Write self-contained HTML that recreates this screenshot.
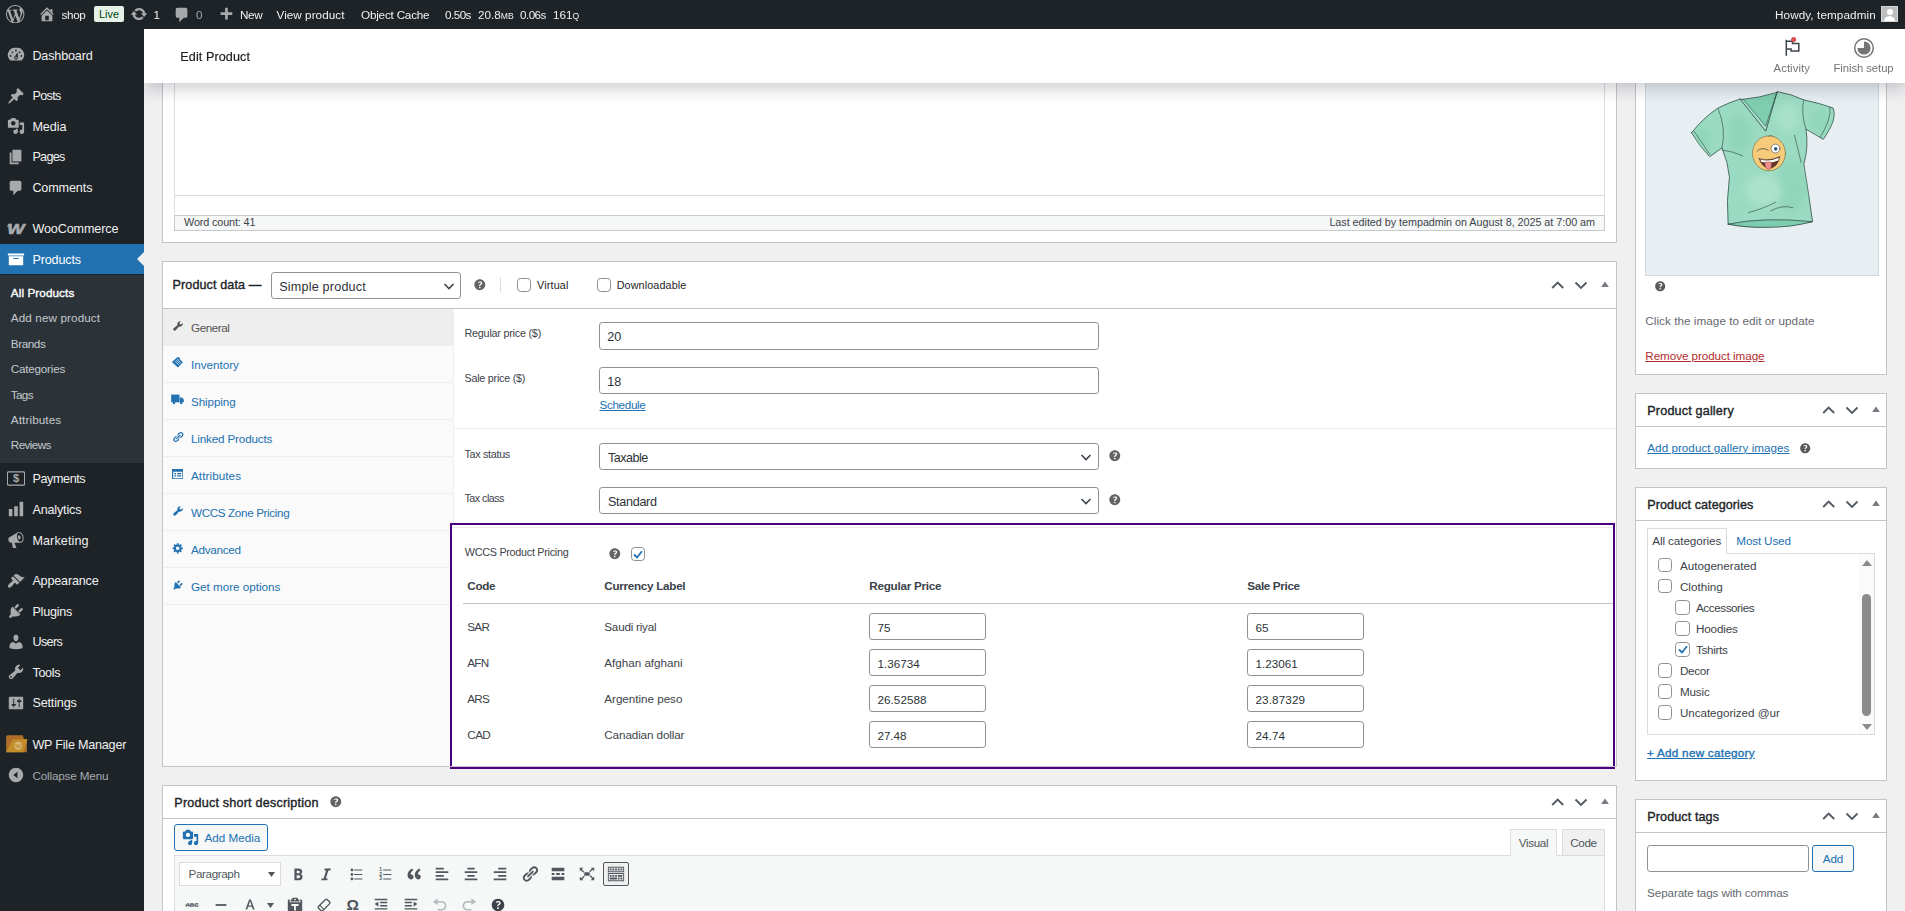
<!DOCTYPE html>
<html lang="en"><head>
<meta charset="utf-8">
<title>Edit product</title>
<style>
*{box-sizing:border-box;margin:0;padding:0}
html,body{width:1905px;height:911px;overflow:hidden;background:#f0f0f1}
body{font-family:"Liberation Sans",sans-serif;font-size:11.7px;color:#3c434a;position:relative;line-height:1.4}
.abs{position:absolute}
svg{display:block}
a{color:#2271b1}

/* ---------- admin bar ---------- */
#bar{position:absolute;left:0;top:0;width:1905px;height:29px;background:#1d2327;color:#f0f0f1;font-size:11.7px;z-index:30}
#bar .t{position:absolute;top:0;height:29px;line-height:30px;white-space:nowrap}
#bar svg{position:absolute;fill:#a7aaad}

/* ---------- admin menu ---------- */
#menu{position:absolute;left:0;top:29px;width:144px;height:882px;background:#1d2327;z-index:20}
#menu .it{position:absolute;left:0;width:144px;height:30.6px;color:#f0f0f1;font-size:12.6px;line-height:32.2px;padding-left:32.4px;white-space:nowrap}
#menu .it svg{position:absolute;left:7.2px;top:6.8px;width:18px;height:18px;fill:#a7aaad}
#menu .it.cur{background:#2271b1;color:#fff}
#menu .it.cur svg{fill:#fff}
#menu .sub{position:absolute;left:0;top:245.8px;width:144px;height:188.1px;background:#2c3338}
#menu .sub div{position:absolute;left:10.8px;font-size:11.7px;color:#c3c8cd;white-space:nowrap;line-height:16px}

/* ---------- header ---------- */
#hdr{position:absolute;left:144px;top:29px;width:1761px;height:54px;background:#fff;z-index:10;box-shadow:0 6px 15px rgba(25,30,45,.21)}
#hdr h1{position:absolute;left:36.3px;top:0;line-height:56px;font-size:12.6px;font-weight:400;-webkit-text-stroke:.2px #1e1e1e;color:#1e1e1e}
#hdr .lbl{position:absolute;font-size:10.8px;color:#757575;white-space:nowrap}

/* ---------- postbox ---------- */
.pb{position:absolute;background:#fff}
.pb::after{content:"";position:absolute;left:0;top:0;right:0;bottom:0;border:1px solid #c3c4c7;z-index:5;pointer-events:none}
.pb .hd{position:absolute;left:0;top:0;right:0;border-bottom:1px solid #c3c4c7}
.pb h2{position:absolute;font-size:12.6px;font-weight:400;-webkit-text-stroke:.38px #1d2327;color:#1d2327;white-space:nowrap;line-height:16px}
.arr{position:absolute}
.inp{position:absolute;background:#fff;border:1px solid #8c8f94;border-radius:3.2px;font-size:12.6px;color:#2c3338;line-height:29.5px;padding-left:7.2px;white-space:nowrap}
.cb{position:absolute;width:14.4px;height:14.4px;background:#fff;border:1px solid #8c8f94;border-radius:3.6px}
.lb{position:absolute;font-size:10.8px;color:#3c434a;white-space:nowrap;line-height:14px}
.tx{position:absolute;white-space:nowrap}
</style>
</head>
<body>

<!-- ADMIN BAR -->
<div id="bar">
<svg style="left:6.4px;top:4.8px" width="18.4" height="18.4" viewBox="0 0 20 20"><path d="M20 10c0-5.51-4.49-10-10-10C4.48 0 0 4.49 0 10c0 5.52 4.48 10 10 10 5.51 0 10-4.48 10-10zM7.78 15.37L4.37 6.22c.55-.02 1.17-.08 1.17-.08.5-.06.44-1.13-.06-1.11 0 0-1.45.11-2.37.11-.18 0-.37 0-.58-.01C4.12 2.69 6.87 1.11 10 1.11c2.33 0 4.45.87 6.05 2.34-.68-.11-1.65.39-1.65 1.58 0 .74.45 1.36.9 2.1.35.61.55 1.36.55 2.46 0 1.49-1.4 5-1.4 5l-3.03-8.37c.54-.02.82-.17.82-.17.5-.05.44-1.25-.06-1.22 0 0-1.44.12-2.38.12-.87 0-2.33-.12-2.33-.12-.5-.03-.56 1.2-.06 1.22l.92.08 1.26 3.41zM17.41 10c.24-.64.74-1.87.43-4.25.7 1.29 1.05 2.71 1.05 4.25 0 3.29-1.73 6.24-4.4 7.78.97-2.59 1.94-5.2 2.92-7.78zM6.1 18.09C3.12 16.65 1.11 13.53 1.11 10c0-1.3.23-2.48.72-3.59C3.25 10.3 4.67 14.2 6.1 18.09zm4.03-6.63l2.58 6.98c-.86.29-1.76.45-2.71.45-.79 0-1.57-.11-2.29-.33.81-2.38 1.62-4.74 2.42-7.1z"></path></svg>
<svg style="left:38px;top:5px" width="18" height="18" viewBox="0 0 20 20"><path d="M16 8.5l1.530 1.530-1.060 1.060L10 4.620l-6.470 6.470-1.060-1.060L10 2.500l4 4v-2h2v4zm-6-2.460l6 5.990V18H4v-5.970zM12 17v-5H8v5h4z"></path></svg>
<div class="t" style="left: 61.5px; letter-spacing: -0.34px;">shop</div>
<div class="abs" style="left:94px;top:6px;width:30px;height:16px;background:#e6f2e8;border-radius:2px;color:#00450c;font-size:10.8px;line-height:16.500px;text-align:center">Live</div>
<svg style="left:130px;top:5.2px" width="18" height="18" viewBox="0 0 20 20"><path d="M10.200 3.280c3.530 0 6.430 2.610 6.920 6h2.080l-3.500 4-3.500-4h2.320c-.450-1.970-2.210-3.450-4.320-3.450-1.450 0-2.730.710-3.540 1.780L4.950 5.660C6.230 4.200 8.110 3.280 10.200 3.280zm-.400 13.440c-3.520 0-6.430-2.610-6.920-6H.800l3.500-4c1.170 1.330 2.330 2.670 3.500 4H5.480c.450 1.970 2.210 3.450 4.320 3.450 1.450 0 2.730-.710 3.540-1.780l1.710 1.950c-1.280 1.460-3.150 2.380-5.250 2.380z"></path></svg>
<div class="t" style="left:153.5px">1</div>
<svg style="left:172.8px;top:5.8px" width="18" height="18" viewBox="0 0 20 20"><path d="M5 2h9c1.100 0 2 .900 2 2v7c0 1.100-.900 2-2 2h-2l-5 5v-5H5c-1.100 0-2-.900-2-2V4c0-1.100.900-2 2-2z"></path></svg>
<div class="t" style="left:196px;color:#a7aaad">0</div>
<svg style="left:216.8px;top:5.8px" width="18" height="18" viewBox="0 0 20 20"><path d="M17 7v3h-5v5H9v-5H4V7h5V2h3v5h5z"></path></svg>
<div class="t" style="left: 240px; letter-spacing: -0.33px;">New</div>
<div class="t" style="left: 276.5px; letter-spacing: 0.05px;">View product</div>
<div class="t" style="left: 361px; letter-spacing: -0.2px;">Object Cache</div>
<div class="t" style="left: 445px; letter-spacing: -0.54px;">0.50s</div>
<div class="t" style="left:478px">20.8<span style="font-size:8.6px">MB</span></div>
<div class="t" style="left: 520px; letter-spacing: -0.56px;">0.06s</div>
<div class="t" style="left:553px">161<span style="font-size:8.6px">Q</span></div>
<div class="t" style="left: 1775px; letter-spacing: 0.1px;">Howdy, tempadmin</div>
<div class="abs" style="left:1881px;top:6px;width:17px;height:16px;background:#bdbdbd;border:1px solid #d5d5d5;overflow:hidden"><div class="abs" style="left:5px;top:2px;width:5.500px;height:5.500px;border-radius:50%;background:#fff"></div><div class="abs" style="left:2px;top:8.500px;width:11px;height:9px;border-radius:5.500px 5.500px 0 0;background:#fff"></div></div>
</div>

<!-- ADMIN MENU -->
<div id="menu">
<div class="it " style="top: 10.6px; letter-spacing: -0.16px;"><svg viewBox="0 0 20 20"><path d="M3.760 16h12.480A7.998 7.998 0 0010 2a7.998 7.998 0 00-6.240 14zM10 4c.550 0 1 .450 1 1s-.450 1-1 1-1-.450-1-1 .450-1 1-1zM6 6c.550 0 1 .450 1 1s-.450 1-1 1-1-.450-1-1 .450-1 1-1zm8 0c.550 0 1 .450 1 1s-.450 1-1 1-1-.450-1-1 .450-1 1-1zm-5.370 5.550L12 7v6c0 1.100-.900 2-2 2s-2-.900-2-2c0-.570.240-1.080.630-1.450zM4 10c.550 0 1 .450 1 1s-.450 1-1 1-1-.450-1-1 .450-1 1-1zm12 0c.550 0 1 .450 1 1s-.450 1-1 1-1-.450-1-1 .450-1 1-1zm-5 3c0-.550-.450-1-1-1s-1 .450-1 1 .450 1 1 1 1-.450 1-1z"></path></svg>Dashboard</div>
<div class="it " style="top: 51.1px; letter-spacing: -0.64px;"><svg viewBox="0 0 20 20"><path d="M10.440 3.020l1.820-1.820 6.360 6.350-1.830 1.820c-1.050-.680-2.480-.570-3.410.360l-.750.750c-.920.930-1.040 2.350-.350 3.410l-1.830 1.820-2.410-2.410-2.800 2.790c-.420.420-3.380 2.710-3.800 2.290s1.860-3.390 2.280-3.810l2.790-2.790L4.100 9.360l1.830-1.820c1.050.690 2.480.570 3.400-.360l.750-.750c.930-.920 1.050-2.350.360-3.410z"></path></svg>Posts</div>
<div class="it " style="top: 81.7px; letter-spacing: -0.02px;"><svg viewBox="0 0 20 20"><path d="M13 11V4c0-.550-.450-1-1-1h-1.670L9 1H5L3.670 3H2c-.550 0-1 .450-1 1v7c0 .550.450 1 1 1h10c.550 0 1-.450 1-1zM7 4.500c1.380 0 2.500 1.120 2.500 2.500S8.380 9.500 7 9.500 4.500 8.380 4.500 7 5.620 4.500 7 4.500zM14 6h5v10.500c0 1.380-1.120 2.500-2.500 2.500S14 17.880 14 16.500s1.120-2.500 2.500-2.500c.170 0 .340.020.500.050V9h-3V6zm-4 8.050V13h2v3.500c0 1.380-1.120 2.500-2.500 2.500S7 17.880 7 16.500 8.120 14 9.500 14c.170 0 .340.020.500.050z"></path></svg>Media</div>
<div class="it " style="top: 112.3px; letter-spacing: -0.7px;"><svg viewBox="0 0 20 20"><path d="M6 15V2h10v13H6zm-1 1h8v2H3V5h2v11z"></path></svg>Pages</div>
<div class="it " style="top: 142.9px; letter-spacing: -0.12px;"><svg viewBox="0 0 20 20"><path d="M5 2h9c1.100 0 2 .900 2 2v7c0 1.100-.900 2-2 2h-2l-5 5v-5H5c-1.100 0-2-.900-2-2V4c0-1.100.900-2 2-2z"></path></svg>Comments</div>
<div class="it " style="top: 184.1px; letter-spacing: -0.12px;"><svg viewBox="0 0 20 20" style="overflow:visible"><text x="9.800" y="15.400" font-family="Liberation Sans, sans-serif" font-weight="700" font-style="italic" font-size="15.400" text-anchor="middle" transform="translate(9.8 0) scale(1.32 1) translate(-9.8 0)" stroke="#a7aaad" stroke-width=".7" style="letter-spacing:0">W</text><path d="M-.3 7.100Q1 4.300 4.200 4.300L5.500 4.300L4.800 7.100z"></path></svg>WooCommerce</div>
<div class="it cur" style="top: 214.6px; letter-spacing: -0.15px;"><svg viewBox="0 0 20 20"><path d="M19 4v2H1V4h18zM2 7h16v10H2V7zm11 3V9H7v1h6z"></path></svg>Products</div>
<div class="it " style="top: 433.9px; letter-spacing: -0.39px;"><svg viewBox="0 0 20 20"><rect x="0.400" y="2.100" width="19.200" height="14.600" rx="1.200" fill="none" stroke="#a7aaad" stroke-width="1.400"></rect><text x="10" y="13.800" font-family="Liberation Sans, sans-serif" font-weight="700" font-size="12.400" text-anchor="middle" letter-spacing="0" style="letter-spacing:0">$</text></svg>Payments</div>
<div class="it " style="top: 464.7px; letter-spacing: -0.16px;"><svg viewBox="0 0 20 20"><path d="M18 18V2h-4v16h4zm-6 0V7H8v11h4zm-6 0v-8H2v8h4z"></path></svg>Analytics</div>
<div class="it " style="top: 495.5px; letter-spacing: 0.1px;"><svg viewBox="0 0 20 20"><path d="M18.150 5.940c.460 1.620.380 3.220-.020 4.480-.420 1.280-1.260 2.180-2.300 2.480-.160.060-.260.060-.400.060-.060.020-.120.020-.180.020-.060.020-.140.020-.220.020h-6.800l2.220 5.500c.020.140-.060.260-.140.340-.080.100-.240.160-.340.160H6.950c-.100 0-.260-.060-.340-.160-.080-.080-.160-.200-.140-.340l-1-5.500H4.250l-.020-.020c-.500.060-1.080-.180-1.540-.620s-.880-1.080-1.060-1.880c-.240-.800-.200-1.560-.020-2.200.180-.620.580-1.080 1.060-1.300l.020-.020 9-5.400c.100-.060.180-.100.240-.160.060-.040.140-.080.240-.120.160-.080.280-.120.500-.180 1.040-.300 2.240.100 3.220.980s1.840 2.240 2.260 3.860zm-2.580 5.980h-.020c.400-.100.740-.340 1.040-.700.580-.700.860-1.760.860-3.040 0-.640-.100-1.300-.280-1.980-.340-1.360-1.020-2.500-1.780-3.240s-1.680-1.100-2.460-.880c-.820.220-1.400.960-1.700 2-.320 1.040-.280 2.360.060 3.720.380 1.360 1 2.500 1.800 3.240.780.740 1.620 1.100 2.480.880zm-2.540-7.080c.220-.040.420-.020.620.040.380.160.760.480 1.020 1s.420 1.200.420 1.780c0 .300-.040.560-.120.800-.180.480-.440.840-.860.940-.340.100-.800-.060-1.140-.400s-.640-.860-.780-1.500c-.180-.620-.120-1.240.020-1.720s.480-.840.820-.940z"></path></svg>Marketing</div>
<div class="it " style="top: 535.8px; letter-spacing: -0.18px;"><svg viewBox="0 0 20 20"><path d="M14.480 11.060L7.410 3.990l1.500-1.500c.500-.560 2.300-.470 3.510.320 1.210.800 1.430 1.280 2.910 2.100 1.180.640 2.450 1.260 4.450.850zm-.710.710L6.700 4.700 4.930 6.470c-.390.390-.390 1.020 0 1.410l1.060 1.060c.390.390.390 1.030 0 1.420-.600.600-1.430 1.110-2.210 1.690-.350.260-.700.530-1.010.840C1.430 14.230.400 16.080 1.400 17.070c.990 1 2.840-.030 4.180-1.360.310-.310.580-.660.850-1.020.570-.780 1.080-1.610 1.690-2.210.390-.390 1.020-.390 1.410 0l1.060 1.060c.390.390 1.020.390 1.410 0z"></path></svg>Appearance</div>
<div class="it " style="top: 566.6px; letter-spacing: -0.22px;"><svg viewBox="0 0 20 20"><path d="M13.110 4.360L9.870 7.600 8 5.730l3.240-3.240c.350-.340 1.050-.200 1.560.320.520.510.660 1.210.310 1.550zm-8 1.770l.910-1.120 9.010 9.010-1.190.840c-.710.710-2.630 1.160-3.820 1.160H6.140L4.900 17.260c-.590.590-1.540.590-2.120 0-.590-.580-.590-1.530 0-2.120l1.240-1.240v-3.880c0-1.130.400-3.190 1.090-3.890zm7.260 3.970l3.240-3.240c.340-.350 1.040-.210 1.550.310.520.510.660 1.210.310 1.550l-3.240 3.250z"></path></svg>Plugins</div>
<div class="it " style="top: 597.3px; letter-spacing: -0.6px;"><svg viewBox="0 0 20 20"><path d="M10 9.250c-2.270 0-2.730-3.440-2.730-3.440C7 4.020 7.820 2 9.970 2c2.160 0 2.980 2.020 2.710 3.810 0 0-.410 3.440-2.680 3.440zm0 2.570L12.720 10c2.390 0 4.520 2.330 4.520 4.530v2.490s-3.650 1.130-7.240 1.130c-3.650 0-7.240-1.130-7.240-1.130v-2.490c0-2.250 1.940-4.480 4.470-4.480z"></path></svg>Users</div>
<div class="it " style="top: 627.6px; letter-spacing: -0.3px;"><svg viewBox="0 0 20 20"><path d="M16.680 9.770c-1.340 1.340-3.300 1.670-4.950.990l-5.410 6.520c-.990.990-2.590.990-3.580 0s-.990-2.590 0-3.570l6.520-5.420c-.680-1.650-.350-3.610.990-4.950 1.280-1.280 3.120-1.620 4.720-1.060l-2.890 2.890 2.820 2.820 2.860-2.870c.530 1.580.180 3.390-1.080 4.650zM3.810 16.210c.400.390 1.040.390 1.430 0 .400-.400.400-1.040 0-1.430-.390-.400-1.030-.400-1.430 0-.390.390-.390 1.030 0 1.430z"></path></svg>Tools</div>
<div class="it " style="top: 658.4px; letter-spacing: -0.16px;"><svg viewBox="0 0 20 20"><path d="M18 16V4c0-.550-.450-1-1-1H3c-.550 0-1 .450-1 1v12c0 .550.450 1 1 1h14c.550 0 1-.450 1-1zM8 11h1c.550 0 1 .450 1 1s-.450 1-1 1H8v1.500c0 .280-.220.500-.500.500s-.500-.220-.500-.500V13H6c-.550 0-1-.450-1-1s.450-1 1-1h1V5.500c0-.280.220-.500.500-.500s.500.220.500.500V11zm5-2h-1c-.550 0-1-.450-1-1s.450-1 1-1h1V5.500c0-.280.220-.500.500-.500s.500.220.500.500V7h1c.550 0 1 .450 1 1s-.450 1-1 1h-1v5.500c0 .280-.220.500-.500.500s-.500-.220-.500-.500V9z"></path></svg>Settings</div>
<div class="it " style="top: 699.5px; letter-spacing: -0.22px;"><svg viewBox="0 0 20 20" preserveAspectRatio="none" style="left:4.700px;top:2.200px;width:23px;height:24.600px"><path d="M1 4.800Q1 3.500 2.300 3.500h13.200l.8 3H19v10.700H1z" fill="#b06f28"></path><path d="M6.300 7.800Q6.800 6.700 8 6.700h11.600L15.800 17.200H1z" fill="#c48d2c"></path><circle cx="11.400" cy="12" r="3.300" fill="#d6b775"></circle><text x="11.400" y="14" font-family="Liberation Serif, serif" font-size="5.500" font-weight="700" text-anchor="middle" fill="#c48d2c" style="letter-spacing:0">W</text></svg>WP File Manager</div>
<div class="it " style="top: 730.5px; color: rgb(167, 170, 173); font-size: 11.7px; letter-spacing: -0.15px;"><svg viewBox="0 0 20 20"><path d="M10 2.020c-4.420 0-8 3.580-8 8s3.580 8 8 8 8-3.580 8-8-3.580-8-8-8zM11.600 13.700L7 10l4.600-3.700z"></path></svg>Collapse Menu</div>
<div class="abs" style="left:136.800px;top:222.700px;width:0;height:0;border:7.200px solid transparent;border-right-color:#f0f0f1;border-left-width:0"></div>
<div class="sub">
<div style="top: 10.3px; color: rgb(255, 255, 255); font-weight: 400; -webkit-text-stroke: 0.36px rgb(255, 255, 255); letter-spacing: 0.1px;">All Products</div>
<div style="top: 35.7px; letter-spacing: 0.11px;">Add new product</div>
<div style="top: 61.1px; letter-spacing: -0.42px;">Brands</div>
<div style="top: 86.5px; letter-spacing: -0.23px;">Categories</div>
<div style="top: 111.9px; letter-spacing: -0.67px;">Tags</div>
<div style="top: 137.3px; letter-spacing: 0.11px;">Attributes</div>
<div style="top: 162.7px; letter-spacing: -0.6px;">Reviews</div>
</div>
</div>

<!-- HEADER -->
<div id="hdr">
<h1 style="letter-spacing: 0.09px;">Edit Product</h1>
<svg class="abs" style="left:1637px;top:6px" width="24" height="24" viewBox="0 0 24 24"><path d="M5.300 4.800v16" stroke="#3c434a" stroke-width="1.500" fill="none"></path><path d="M5.300 6.200h6.200v2.200h6.300v7.700h-7.700v-2.100H5.300" stroke="#3c434a" stroke-width="1.500" fill="none"></path><circle cx="12.600" cy="4.600" r="2.500" fill="#d94f4f"></circle></svg>
<div class="lbl" style="left: 1629.5px; top: 32px; font-size: 11.3px; letter-spacing: 0.1px;">Activity</div>
<svg class="abs" style="left:1708.800px;top:7.600px" width="22" height="22" viewBox="0 0 22 22"><circle cx="11" cy="11" r="9.300" fill="none" stroke="#757575" stroke-width="1.500"></circle><path d="M11 11V4.400A6.600 6.600 0 1 1 4.400 11z" fill="#757575"></path></svg>
<div class="lbl" style="left: 1689.5px; top: 32px; font-size: 11.3px; letter-spacing: -0.07px;">Finish setup</div>
</div>

<!-- MAIN COLUMN -->
<div id="main">
<div class="pb" style="left:162px;top:40px;width:1455px;height:203px">
<div class="abs" style="left:12px;top:0;width:1431px;height:191px;border:1px solid #dcdcde;border-top:0"></div>
<div class="abs" style="left:12px;top:155px;width:1431px;height:1px;background:#dcdcde"></div>
<div class="abs" style="left:12px;top:175px;width:1431px;height:16px;background:#f6f7f7;border:1px solid #c9cacd"></div>
<div class="tx" style="left: 22px; top: 174.2px; font-size: 10.8px; line-height: 16px; color: rgb(60, 67, 74); letter-spacing: -0.12px;">Word count: 41</div>
<div class="tx" style="right: 22px; top: 174.2px; font-size: 10.8px; line-height: 16px; color: rgb(60, 67, 74); letter-spacing: -0.04px;">Last edited by tempadmin on August 8, 2025 at 7:00 am</div>
</div>
<div class="pb" style="left:162px;top:261px;width:1455px;height:506px">
<div class="hd" style="height:48px"></div>
<h2 style="left: 10.5px; top: 15.9px; letter-spacing: 0.1px;">Product data —</h2>
<div class="inp" style="left: 109px; top: 11px; width: 190px; height: 27px; letter-spacing: 0.2px;">Simple product<svg class="abs" style="right:5.500px;top:8.500px" width="12" height="9" viewBox="0 0 12 9" fill="none" stroke="#3c434a" stroke-width="1.600"><path d="M1.500 2l4.500 4.500L10.500 2"></path></svg></div>
<svg class="abs" style="left:310.0px;top:15.6px" width="15.600" height="15.600" viewBox="0 0 20 20"><path fill="#646464" d="M17 10c0-3.870-3.140-7-7-7-3.870 0-7 3.130-7 7s3.130 7 7 7c3.860 0 7-3.130 7-7zm-6.300 1.480H9.140v-.430c0-.380.080-.700.240-.980s.460-.570.880-.890c.410-.290.680-.530.810-.710.140-.180.200-.390.200-.620 0-.250-.090-.440-.280-.580-.190-.130-.450-.190-.790-.190-.580 0-1.250.190-2 .570l-.640-1.280c.870-.490 1.800-.740 2.770-.740.810 0 1.450.200 1.920.580.480.390.710.910.710 1.550 0 .430-.090.800-.290 1.110-.190.320-.570.670-1.110 1.060-.380.280-.610.490-.710.630-.100.150-.150.340-.150.570v.350zm-1.470 2.740c-.180-.170-.270-.420-.270-.730 0-.330.080-.580.260-.750s.430-.250.770-.250c.320 0 .570.090.750.260s.270.420.270.740c0 .300-.090.550-.270.720-.180.180-.430.270-.750.270-.330 0-.580-.090-.760-.260z"></path></svg>
<div class="abs" style="left:338px;top:15.500px;width:1px;height:15.500px;background:#dcdcde"></div>
<div class="cb" style="left:354.500px;top:16.500px"></div><div class="lb" style="left: 375px; top: 17px; color: rgb(29, 35, 39); letter-spacing: 0.17px;">Virtual</div>
<div class="cb" style="left:434.500px;top:16.500px"></div><div class="lb" style="left: 454.7px; top: 17px; color: rgb(29, 35, 39); letter-spacing: 0.11px;">Downloadable</div>
<svg class="abs" style="left:1388.0px;top:18.0px" width="62" height="12" viewBox="0 0 62 12" fill="none" stroke="#555b62" stroke-width="1.900"><path d="M2.200 9L7.700 3.500l5.500 5.500"></path><path d="M25.500 3.500L31 9l5.500-5.500"></path><path d="M51.100 8.100L55 2.600l3.900 5.500z" fill="#787c82" stroke="none"></path></svg>
<div class="abs" style="left:0;top:48px;width:292px;height:457px;background:#fafafa;border-right:1px solid #eee"></div>
<div class="abs" style="left:0;top:48px;width:291px;height:37px; background: rgb(238, 238, 238); border-bottom: 1px solid rgb(238, 238, 238); color: rgb(85, 85, 85); font-size: 11.7px; line-height: 37.5px; padding-left: 29px; white-space: nowrap; letter-spacing: -0.44px;"><svg class="abs" style="left:9.700px;top:11.200px" width="12" height="12" viewBox="0 0 20 20"><path fill="currentColor" d="M16.680 9.770c-1.340 1.340-3.300 1.670-4.950.990l-5.410 6.520c-.990.990-2.590.990-3.580 0s-.990-2.590 0-3.570l6.520-5.420c-.680-1.650-.350-3.610.990-4.950 1.280-1.280 3.120-1.620 4.720-1.060l-2.890 2.890 2.820 2.820 2.860-2.870c.530 1.580.180 3.390-1.080 4.650z"></path></svg>General</div>
<div class="abs" style="left:0;top:85px;width:291px;height:37px; background: rgb(250, 250, 250); border-bottom: 1px solid rgb(238, 238, 238); color: rgb(34, 113, 177); font-size: 11.7px; line-height: 37.5px; padding-left: 29px; white-space: nowrap; letter-spacing: -0.02px;"><svg class="abs" style="left:9.200px;top:10.200px" width="12.500" height="12.500" viewBox="0 0 20 20" fill="currentColor"><path d="M10.500 1.500L19 10l-8 8.500L1.500 9.500z"></path><path d="M8 6.500l6 6M6.300 8.200l6 6M9.700 4.800l6 6" stroke="#fafafa" stroke-width="1.100"></path><circle cx="12.600" cy="3.400" r="1.500"></circle></svg>Inventory</div>
<div class="abs" style="left:0;top:122px;width:291px;height:37px; background: rgb(250, 250, 250); border-bottom: 1px solid rgb(238, 238, 238); color: rgb(34, 113, 177); font-size: 11.7px; line-height: 37.5px; padding-left: 29px; white-space: nowrap; letter-spacing: -0.11px;"><svg class="abs" style="left:8.600px;top:11.400px" width="13" height="11.500" viewBox="0 0 22 20" fill="currentColor"><path d="M0 1h14.500v13.500H0z"></path><path d="M15 6h4L22 9.500v5h-7z"></path><circle cx="5" cy="15.700" r="2.100"></circle><circle cx="17.500" cy="15.700" r="2.100"></circle></svg>Shipping</div>
<div class="abs" style="left:0;top:159px;width:291px;height:37px; background: rgb(250, 250, 250); border-bottom: 1px solid rgb(238, 238, 238); color: rgb(34, 113, 177); font-size: 11.7px; line-height: 37.5px; padding-left: 29px; white-space: nowrap; letter-spacing: -0.17px;"><svg class="abs" style="left:9.700px;top:11.200px" width="12" height="12" viewBox="0 0 20 20"><path fill="currentColor" d="M17.740 2.760c1.680 1.690 1.680 4.410 0 6.100l-1.530 1.520c-1.120 1.120-2.700 1.470-4.140 1.090l2.620-2.610.760-.770.760-.760c.840-.840.840-2.200 0-3.040-.840-.850-2.200-.850-3.040 0l-.770.760-3.380 3.380c-.370-1.440-.020-3.020 1.100-4.140l1.520-1.530c1.690-1.680 4.420-1.680 6.100 0zM8.590 13.430l5.340-5.340c.420-.420.420-1.100 0-1.520-.440-.430-1.130-.390-1.530 0l-5.330 5.340c-.420.420-.420 1.100 0 1.520.440.430 1.130.390 1.520 0zm-.760 2.290l4.140-4.150c.380 1.440.030 3.020-1.090 4.140l-1.520 1.530c-1.690 1.680-4.410 1.680-6.100 0-1.680-1.680-1.680-4.420 0-6.100l1.530-1.520c1.120-1.120 2.700-1.470 4.140-1.100l-4.140 4.150c-.850.840-.850 2.200 0 3.050.840.840 2.200.840 3.040 0z"></path></svg>Linked Products</div>
<div class="abs" style="left:0;top:196px;width:291px;height:37px; background: rgb(250, 250, 250); border-bottom: 1px solid rgb(238, 238, 238); color: rgb(34, 113, 177); font-size: 11.7px; line-height: 37.5px; padding-left: 29px; white-space: nowrap; letter-spacing: 0.07px;"><svg class="abs" style="left:9.500px;top:12px" width="11.500" height="10.300" viewBox="0 0 20 18" fill="currentColor"><path fill-rule="evenodd" d="M0 0h20v18H0zM2 5v11h16V5z"></path><path d="M4 7h3v2H4zM4 11h3v2H4zM9 7h7v2H9zM9 11h7v2H9z"></path></svg>Attributes</div>
<div class="abs" style="left: 0px; top: 233px; width: 291px; height: 37px; background: rgb(250, 250, 250); border-bottom: 1px solid rgb(238, 238, 238); color: rgb(34, 113, 177); font-size: 11.7px; line-height: 37.5px; padding-left: 29px; white-space: nowrap; letter-spacing: -0.37px;"><svg class="abs" style="left:9.700px;top:11.200px" width="12" height="12" viewBox="0 0 20 20"><path fill="currentColor" d="M16.680 9.770c-1.340 1.340-3.300 1.670-4.950.990l-5.410 6.520c-.990.990-2.590.990-3.580 0s-.990-2.590 0-3.570l6.520-5.420c-.680-1.650-.350-3.610.990-4.950 1.280-1.280 3.120-1.620 4.720-1.060l-2.890 2.890 2.820 2.820 2.860-2.870c.530 1.580.180 3.390-1.080 4.650z"></path></svg>WCCS Zone Pricing</div>
<div class="abs" style="left:0;top:270px;width:291px;height:37px; background: rgb(250, 250, 250); border-bottom: 1px solid rgb(238, 238, 238); color: rgb(34, 113, 177); font-size: 11.7px; line-height: 37.5px; padding-left: 29px; white-space: nowrap; letter-spacing: -0.29px;"><svg class="abs" style="left:9.700px;top:11.200px" width="12" height="12" viewBox="0 0 20 20"><path fill="currentColor" d="M18 12h-2.180c-.170.700-.440 1.350-.810 1.930l1.540 1.540-2.100 2.100-1.540-1.540c-.580.360-1.230.630-1.910.790V19H8v-2.180c-.680-.160-1.330-.430-1.910-.790l-1.540 1.540-2.120-2.120 1.540-1.540c-.360-.580-.630-1.230-.790-1.910H1V9.030h2.170c.160-.700.440-1.350.800-1.940L2.430 5.550l2.100-2.100 1.540 1.540c.580-.370 1.240-.640 1.930-.810V2h3v2.180c.680.160 1.330.430 1.910.790l1.540-1.540 2.120 2.120-1.540 1.540c.360.590.640 1.240.800 1.940H18V12zm-8.500 1.500c1.660 0 3-1.340 3-3s-1.340-3-3-3-3 1.340-3 3 1.340 3 3 3z"></path></svg>Advanced</div>
<div class="abs" style="left:0;top:307px;width:291px;height:37px; background: rgb(250, 250, 250); border-bottom: 1px solid rgb(238, 238, 238); color: rgb(34, 113, 177); font-size: 11.7px; line-height: 37.5px; padding-left: 29px; white-space: nowrap; letter-spacing: -0.02px;"><svg class="abs" style="left:9.700px;top:11.200px" width="12" height="12" viewBox="0 0 20 20"><path fill="currentColor" d="M13.110 4.360L9.870 7.600 8 5.730l3.240-3.240c.350-.340 1.050-.200 1.560.320.520.510.660 1.210.310 1.550zm-8 1.770l.910-1.120 9.010 9.010-1.190.840c-.710.710-2.630 1.160-3.820 1.160H6.140L4.900 17.260c-.590.590-1.540.590-2.120 0-.590-.580-.590-1.530 0-2.120l1.240-1.240v-3.880c0-1.130.400-3.190 1.090-3.890zm7.260 3.970l3.240-3.240c.340-.350 1.040-.210 1.550.310.520.510.660 1.210.310 1.550l-3.240 3.250z"></path></svg>Get more options</div>
<div class="lb" style="left: 302.5px; top: 65.3px; letter-spacing: -0.23px;">Regular price ($)</div>
<div class="inp" style="left:437px;top:61px;width:500px;height:28px">20</div>
<div class="lb" style="left: 302.5px; top: 110px; letter-spacing: -0.26px;">Sale price ($)</div>
<div class="inp" style="left:437px;top:106px;width:500px;height:27px">18</div>
<a class="tx" style="left: 437.5px; top: 136px; font-size: 11.7px; text-decoration: underline; letter-spacing: -0.34px;">Schedule</a>
<div class="abs" style="left:292px;top:167px;right:0;height:1px;background:#eee"></div>
<div class="lb" style="left: 302.5px; top: 186px; letter-spacing: -0.32px;">Tax status</div>
<div class="inp" style="left: 437px; top: 182px; width: 500px; height: 27px; padding-left: 8px; letter-spacing: -0.53px;">Taxable<svg class="abs" style="right:6.500px;top:9px" width="12" height="9" viewBox="0 0 12 9" fill="none" stroke="#3c434a" stroke-width="1.600"><path d="M1.500 2l4.500 4.500L10.500 2"></path></svg></div>
<svg class="abs" style="left:944.7px;top:186.9px" width="15.600" height="15.600" viewBox="0 0 20 20"><path fill="#646464" d="M17 10c0-3.870-3.140-7-7-7-3.870 0-7 3.130-7 7s3.130 7 7 7c3.860 0 7-3.130 7-7zm-6.300 1.480H9.140v-.430c0-.380.080-.700.240-.980s.460-.570.880-.890c.410-.290.680-.530.810-.710.140-.180.200-.390.200-.620 0-.250-.090-.440-.280-.580-.190-.130-.450-.190-.790-.190-.580 0-1.250.190-2 .570l-.640-1.280c.870-.490 1.800-.740 2.770-.740.810 0 1.450.200 1.920.580.480.390.710.910.710 1.550 0 .430-.090.800-.290 1.110-.190.320-.570.670-1.110 1.060-.380.280-.610.490-.710.630-.100.150-.150.340-.150.570v.350zm-1.470 2.740c-.180-.170-.270-.420-.270-.730 0-.330.080-.580.260-.750s.430-.250.770-.250c.320 0 .570.090.750.260s.270.420.270.740c0 .300-.090.550-.270.720-.180.180-.430.270-.750.270-.330 0-.580-.090-.760-.260z"></path></svg>
<div class="lb" style="left: 302.5px; top: 230px; letter-spacing: -0.56px;">Tax class</div>
<div class="inp" style="left: 437px; top: 226px; width: 500px; height: 27px; padding-left: 8px; letter-spacing: -0.3px;">Standard<svg class="abs" style="right:6.500px;top:9px" width="12" height="9" viewBox="0 0 12 9" fill="none" stroke="#3c434a" stroke-width="1.600"><path d="M1.500 2l4.500 4.500L10.500 2"></path></svg></div>
<svg class="abs" style="left:944.7px;top:230.9px" width="15.600" height="15.600" viewBox="0 0 20 20"><path fill="#646464" d="M17 10c0-3.870-3.140-7-7-7-3.870 0-7 3.130-7 7s3.130 7 7 7c3.860 0 7-3.130 7-7zm-6.300 1.480H9.140v-.430c0-.380.080-.700.240-.980s.460-.570.880-.890c.410-.290.680-.530.810-.710.140-.180.200-.390.200-.620 0-.250-.090-.440-.280-.580-.190-.130-.450-.190-.790-.190-.580 0-1.250.190-2 .570l-.640-1.280c.870-.490 1.800-.740 2.770-.740.810 0 1.450.200 1.920.580.480.390.710.910.710 1.550 0 .430-.090.800-.290 1.110-.190.320-.570.670-1.110 1.060-.380.280-.610.490-.710.630-.100.150-.150.340-.150.570v.350zm-1.470 2.740c-.180-.170-.270-.420-.270-.730 0-.330.080-.580.260-.750s.430-.250.770-.250c.320 0 .570.090.750.260s.270.420.270.740c0 .300-.090.550-.270.720-.180.180-.430.270-.750.270-.330 0-.580-.090-.760-.260z"></path></svg>
<div class="abs" style="left:288.300px;top:262.400px;width:1164.700px;height:246px;border:2px solid #4b0082;background:#fff;z-index:2">
<div class="abs" style="left:0;top:1.500px;right:0;height:1px;background:#eee"></div>
<div class="lb" style="left: 12.5px; top: 20px; letter-spacing: -0.28px;">WCCS Product Pricing</div>
<svg class="abs" style="left:155.0px;top:20.4px" width="15.600" height="15.600" viewBox="0 0 20 20"><path fill="#646464" d="M17 10c0-3.870-3.140-7-7-7-3.870 0-7 3.130-7 7s3.130 7 7 7c3.860 0 7-3.130 7-7zm-6.300 1.480H9.140v-.430c0-.380.080-.700.240-.980s.460-.570.880-.890c.410-.290.680-.530.810-.710.140-.180.200-.390.200-.620 0-.250-.090-.440-.280-.580-.190-.130-.450-.190-.790-.190-.580 0-1.250.190-2 .570l-.640-1.280c.870-.490 1.800-.740 2.770-.740.810 0 1.450.200 1.920.580.480.390.710.910.710 1.550 0 .430-.090.800-.290 1.110-.190.320-.570.670-1.110 1.060-.380.280-.610.490-.710.630-.100.150-.150.340-.150.570v.350zm-1.470 2.740c-.180-.170-.270-.420-.270-.730 0-.330.080-.580.260-.750s.430-.250.770-.250c.320 0 .570.090.750.260s.270.420.270.740c0 .300-.090.550-.270.720-.180.180-.430.270-.750.270-.330 0-.580-.090-.760-.260z"></path></svg>
<div class="cb" style="left:178.7px;top:21.3px"><svg class="abs" style="left:1.500px;top:2px" width="10" height="9" viewBox="0 0 10 9" fill="none" stroke="#2271b1" stroke-width="1.800"><path d="M1 4.500l3 3L9 1.200"></path></svg></div>
<div class="tx" style="left: 15px; top: 52.6px; font-weight: 700; font-size: 11.7px; line-height: 16px; color: rgb(60, 67, 74); letter-spacing: -0.33px;">Code</div>
<div class="tx" style="left: 152px; top: 52.6px; font-weight: 700; font-size: 11.7px; line-height: 16px; color: rgb(60, 67, 74); letter-spacing: -0.29px;">Currency Label</div>
<div class="tx" style="left: 417px; top: 52.6px; font-weight: 700; font-size: 11.7px; line-height: 16px; color: rgb(60, 67, 74); letter-spacing: -0.27px;">Regular Price</div>
<div class="tx" style="left: 795px; top: 52.6px; font-weight: 700; font-size: 11.7px; line-height: 16px; color: rgb(60, 67, 74); letter-spacing: -0.35px;">Sale Price</div>
<div class="abs" style="left:11.0px;top:78.0px;right:0;height:1px;background:#c3c4c7"></div>
<div class="tx" style="left: 15px; top: 93.6px; font-size: 11.7px; line-height: 16px; color: rgb(60, 67, 74); letter-spacing: -0.75px;">SAR</div>
<div class="tx" style="left: 152px; top: 93.6px; font-size: 11.7px; line-height: 16px; color: rgb(60, 67, 74); letter-spacing: -0.23px;">Saudi riyal</div>
<div class="inp" style="left:417.0px;top:87.8px;width:116.500px;height:27px;font-size:11.700px;line-height:27px">75</div>
<div class="inp" style="left:795.0px;top:87.8px;width:116.500px;height:27px;font-size:11.700px;line-height:27px">65</div>
<div class="tx" style="left: 15px; top: 129.6px; font-size: 11.7px; line-height: 16px; color: rgb(60, 67, 74); letter-spacing: -0.73px;">AFN</div>
<div class="tx" style="left: 152px; top: 129.6px; font-size: 11.7px; line-height: 16px; color: rgb(60, 67, 74); letter-spacing: -0.03px;">Afghan afghani</div>
<div class="inp" style="left: 417px; top: 123.8px; width: 116.5px; height: 27px; font-size: 11.7px; line-height: 27px; letter-spacing: 0.01px;">1.36734</div>
<div class="inp" style="left: 795px; top: 123.8px; width: 116.5px; height: 27px; font-size: 11.7px; line-height: 27px; letter-spacing: 0.01px;">1.23061</div>
<div class="tx" style="left: 15px; top: 165.6px; font-size: 11.7px; line-height: 16px; color: rgb(60, 67, 74); letter-spacing: -0.75px;">ARS</div>
<div class="tx" style="left: 152px; top: 165.6px; font-size: 11.7px; line-height: 16px; color: rgb(60, 67, 74); letter-spacing: -0.04px;">Argentine peso</div>
<div class="inp" style="left: 417px; top: 159.8px; width: 116.5px; height: 27px; font-size: 11.7px; line-height: 27px; letter-spacing: 0.04px;">26.52588</div>
<div class="inp" style="left: 795px; top: 159.8px; width: 116.5px; height: 27px; font-size: 11.7px; line-height: 27px; letter-spacing: 0.12px;">23.87329</div>
<div class="tx" style="left:15.0px;top:201.6px;font-size:11.700px;line-height:16px;color:#3c434a;letter-spacing:-.6px">CAD</div>
<div class="tx" style="left: 152px; top: 201.6px; font-size: 11.7px; line-height: 16px; color: rgb(60, 67, 74); letter-spacing: -0.12px;">Canadian dollar</div>
<div class="inp" style="left: 417px; top: 195.8px; width: 116.5px; height: 27px; font-size: 11.7px; line-height: 27px; letter-spacing: -0.07px;">27.48</div>
<div class="inp" style="left: 795px; top: 195.8px; width: 116.5px; height: 27px; font-size: 11.7px; line-height: 27px; letter-spacing: 0.07px;">24.74</div>
</div>
</div>
<div class="pb" style="left:162px;top:785px;width:1455px;height:140px">
<div class="hd" style="height:34px"></div>
<h2 style="left: 12.3px; top: 10.2px; letter-spacing: 0.2px;">Product short description</h2>
<svg class="abs" style="left:166.2px;top:8.7px" width="15.600" height="15.600" viewBox="0 0 20 20"><path fill="#646464" d="M17 10c0-3.870-3.140-7-7-7-3.870 0-7 3.130-7 7s3.130 7 7 7c3.860 0 7-3.130 7-7zm-6.300 1.480H9.140v-.430c0-.380.080-.700.240-.980s.460-.570.880-.890c.410-.290.680-.530.810-.710.140-.180.200-.390.200-.620 0-.250-.090-.440-.280-.580-.190-.130-.450-.190-.790-.190-.580 0-1.250.190-2 .570l-.640-1.280c.870-.490 1.800-.740 2.770-.740.810 0 1.450.200 1.920.580.480.390.710.910.710 1.550 0 .430-.090.800-.290 1.110-.190.320-.570.670-1.110 1.060-.380.280-.610.490-.710.630-.100.150-.150.340-.150.570v.350zm-1.470 2.740c-.180-.170-.270-.420-.270-.730 0-.330.080-.580.260-.750s.430-.250.770-.250c.320 0 .570.090.750.260s.270.420.270.740c0 .300-.090.550-.270.720-.180.180-.430.270-.750.270-.330 0-.580-.090-.760-.260z"></path></svg>
<svg class="abs" style="left:1388.0px;top:11.0px" width="62" height="12" viewBox="0 0 62 12" fill="none" stroke="#555b62" stroke-width="1.900"><path d="M2.200 9L7.700 3.500l5.500 5.500"></path><path d="M25.500 3.500L31 9l5.500-5.500"></path><path d="M51.100 8.100L55 2.600l3.900 5.500z" fill="#787c82" stroke="none"></path></svg>
<div class="abs" style="left: 12px; top: 39px; width: 94px; height: 27px; border: 1px solid rgb(34, 113, 177); border-radius: 3px; background: rgb(246, 247, 247); color: rgb(34, 113, 177); font-size: 11.7px; line-height: 25px; padding-left: 29.5px; white-space: nowrap; letter-spacing: -0.02px;"><svg class="abs" style="left:6.500px;top:4px" width="17" height="17" viewBox="0 0 20 20"><path fill="#2271b1" d="M13 11V4c0-.550-.450-1-1-1h-1.670L9 1H5L3.670 3H2c-.550 0-1 .450-1 1v7c0 .550.450 1 1 1h10c.550 0 1-.450 1-1zM7 4.500c1.380 0 2.500 1.120 2.500 2.500S8.380 9.500 7 9.500 4.500 8.380 4.500 7 5.620 4.500 7 4.500zM14 6h5v10.500c0 1.380-1.120 2.500-2.500 2.500S14 17.880 14 16.500s1.120-2.500 2.500-2.500c.170 0 .340.020.500.050V9h-3V6zm-4 8.050V13h2v3.500c0 1.380-1.120 2.500-2.500 2.500S7 17.880 7 16.500 8.120 14 9.500 14c.170 0 .340.020.500.050z"></path></svg>Add Media</div>
<div class="abs" style="left: 1348px; top: 44px; width: 47px; height: 27px; border-width: 1px 1px 0px; border-top-style: solid; border-right-style: solid; border-left-style: solid; border-top-color: rgb(220, 220, 222); border-right-color: rgb(220, 220, 222); border-left-color: rgb(220, 220, 222); border-image: initial; border-bottom-style: initial; border-bottom-color: initial; background: rgb(246, 247, 247); color: rgb(80, 87, 94); font-size: 11.7px; line-height: 26px; text-align: center; z-index: 2; letter-spacing: -0.34px;">Visual</div>
<div class="abs" style="left: 1400px; top: 44px; width: 43px; height: 26px; border-width: 1px 1px 0px; border-top-style: solid; border-right-style: solid; border-left-style: solid; border-top-color: rgb(220, 220, 222); border-right-color: rgb(220, 220, 222); border-left-color: rgb(220, 220, 222); border-image: initial; border-bottom-style: initial; border-bottom-color: initial; background: rgb(240, 240, 241); color: rgb(80, 87, 94); font-size: 11.7px; line-height: 26px; text-align: center; letter-spacing: -0.34px;">Code</div>
<div class="abs" style="left:12.0px;top:70.0px;width:1431px;height:80px;border:1px solid #dcdcde;background:#f6f7f7"></div>
<div class="abs" style="left: 17px; top: 77px; width: 102px; height: 24px; border: 1px solid rgb(220, 220, 222); background: rgb(255, 255, 255); color: rgb(80, 87, 94); font-size: 11.7px; line-height: 22px; padding-left: 8.5px; letter-spacing: -0.39px;">Paragraph<svg class="abs" style="right:5px;top:8.500px" width="7" height="5" viewBox="0 0 7 5"><path d="M0 0h7L3.500 5z" fill="#50575e"></path></svg></div>
<div class="abs" style="left:441.0px;top:77.0px;width:26px;height:24px;border:1px solid #50575e;border-radius:2px;background:#f0f0f1"></div>
<svg class="abs" style="left:126.6px;top:80.0px" width="18" height="18" viewBox="0 0 20 20"><path fill="#50575e" d="M6 4v13h4.540c1.370 0 2.460-.330 3.260-1 .800-.660 1.200-1.580 1.200-2.770 0-.840-.170-1.510-.510-2.010s-.900-.850-1.670-1.030v-.090c.570-.100 1.020-.400 1.360-.900s.510-1.130.510-1.910c0-1.140-.390-1.980-1.170-2.500C12.750 4.260 11.500 4 9.780 4H6zm2.570 5.150V6.260h1.360c.730 0 1.270.110 1.610.320.340.220.510.580.510 1.070 0 .540-.160.920-.470 1.150s-.820.350-1.510.350h-1.500zm0 2.190h1.600c1.440 0 2.160.530 2.160 1.610 0 .600-.170 1.050-.510 1.340s-.860.430-1.570.430H8.570v-3.380z"></path></svg>
<svg class="abs" style="left:155.4px;top:80.0px" width="18" height="18" viewBox="0 0 20 20"><path fill="#50575e" d="M14.780 6h-2.130l-2.800 9h2.120l-.620 2H4.600l.620-2h2.140l2.800-9H8.030l.620-2h6.750z"></path></svg>
<svg class="abs" style="left:184.8px;top:80.0px" width="18" height="18" viewBox="0 0 20 20"><path fill="#50575e" d="M5.500 7C4.670 7 4 6.330 4 5.500 4 4.680 4.670 4 5.500 4 6.320 4 7 4.680 7 5.500 7 6.330 6.320 7 5.500 7zM8 5h9v1H8V5zm-2.500 7c-.830 0-1.500-.670-1.500-1.500C4 9.680 4.670 9 5.500 9c.820 0 1.500.680 1.500 1.500 0 .830-.680 1.500-1.500 1.500zM8 10h9v1H8v-1zm-2.500 7c-.830 0-1.500-.670-1.500-1.500 0-.820.670-1.500 1.500-1.500.820 0 1.500.680 1.500 1.500 0 .830-.680 1.500-1.500 1.500zM8 15h9v1H8v-1z"></path></svg>
<svg class="abs" style="left:213.8px;top:80.0px" width="18" height="18" viewBox="0 0 20 20" fill="#50575e"><path d="M8 5h9v1H8zM8 10h9v1H8zM8 15h9v1H8z"></path><text x="3.500" y="7.200" font-family="Liberation Sans, sans-serif" font-size="5.500" font-weight="700">1</text><text x="3.500" y="12.200" font-family="Liberation Sans, sans-serif" font-size="5.500" font-weight="700">2</text><text x="3.500" y="17.200" font-family="Liberation Sans, sans-serif" font-size="5.500" font-weight="700">3</text></svg>
<svg class="abs" style="left:242.5px;top:80.0px" width="18" height="18" viewBox="0 0 20 20"><path fill="#50575e" d="M9.490 13.220c0-.740-.200-1.380-.610-1.900-.620-.780-1.830-.880-2.530-.720-.290-1.650 1.110-3.750 2.920-4.650L7.880 4c-2.730 1.300-5.420 4.280-4.960 8.050C3.210 14.430 4.590 16 6.540 16c.850 0 1.560-.250 2.120-.750s.830-1.180.830-2.030zm8.050 0c0-.740-.200-1.380-.610-1.900-.630-.780-1.830-.880-2.530-.720-.290-1.650 1.110-3.750 2.920-4.650L15.930 4c-2.730 1.300-5.410 4.280-4.950 8.050.290 2.380 1.660 3.950 3.610 3.950.850 0 1.560-.250 2.120-.750s.830-1.180.830-2.030z"></path></svg>
<svg class="abs" style="left:271.2px;top:80.0px" width="18" height="18" viewBox="0 0 20 20"><path fill="#50575e" d="M12 5V3H3v2h9zm5 4V7H3v2h14zm-5 4v-2H3v2h9zm5 4v-2H3v2h14z"></path></svg>
<svg class="abs" style="left:300.2px;top:80.0px" width="18" height="18" viewBox="0 0 20 20"><path fill="#50575e" d="M14 5V3H6v2h8zm3 4V7H3v2h14zm-3 4v-2H6v2h8zm3 4v-2H3v2h14z"></path></svg>
<svg class="abs" style="left:329.4px;top:80.0px" width="18" height="18" viewBox="0 0 20 20"><path fill="#50575e" d="M17 5V3H8v2h9zm0 4V7H3v2h14zm0 4v-2H8v2h9zm0 4v-2H3v2h14z"></path></svg>
<svg class="abs" style="left:358.8px;top:80.0px" width="18" height="18" viewBox="0 0 20 20"><path fill="#50575e" d="M17.740 2.760c1.680 1.690 1.680 4.410 0 6.100l-1.530 1.520c-1.120 1.120-2.700 1.470-4.140 1.090l2.620-2.610.760-.770.760-.760c.840-.840.840-2.200 0-3.040-.840-.850-2.200-.850-3.040 0l-.770.760-3.380 3.380c-.370-1.440-.020-3.020 1.100-4.140l1.520-1.530c1.690-1.680 4.420-1.680 6.100 0zM8.590 13.430l5.340-5.340c.420-.420.420-1.100 0-1.520-.440-.430-1.130-.390-1.530 0l-5.330 5.340c-.420.420-.420 1.100 0 1.520.440.430 1.130.390 1.520 0zm-.760 2.290l4.140-4.150c.380 1.440.030 3.020-1.090 4.140l-1.520 1.530c-1.690 1.680-4.410 1.680-6.100 0-1.680-1.680-1.680-4.420 0-6.100l1.530-1.520c1.120-1.120 2.700-1.470 4.140-1.100l-4.140 4.150c-.850.840-.850 2.200 0 3.050.840.840 2.200.840 3.040 0z"></path></svg>
<svg class="abs" style="left:387.2px;top:80.0px" width="18" height="18" viewBox="0 0 20 20"><path fill="#50575e" d="M17 7V3H3v4h14zM6 11V9H3v2h3zm6 0V9H8v2h4zm5 0V9h-3v2h3zm0 6v-4H3v4h14z"></path></svg>
<svg class="abs" style="left:416.4px;top:80.0px" width="18" height="18" viewBox="0 0 20 20"><path fill="#50575e" d="M7 8h6v4H7zM2 13v4h4l-1.300-1.300L7.500 13l-1-1-2.700 2.700zM14 17h4v-4l-1.300 1.300L14 11.500l-1 1 2.700 2.700zM6 3H2v4l1.300-1.300L6 8.500l1-1-2.700-2.700zM18 7V3h-4l1.300 1.300L12.500 7l1 1 2.700-2.700z"></path></svg>
<svg class="abs" style="left:445.1px;top:80.0px" width="18" height="18" viewBox="0 0 20 20"><path fill="#50575e" d="M19 2v6H1V2h18zm-1 5V3H2v4h16zM5 4v2H3V4h2zm3 0v2H6V4h2zm3 0v2H9V4h2zm3 0v2h-2V4h2zm3 0v2h-2V4h2zm2 5v9H1V9h18zm-1 8v-7H2v7h16zM5 11v2H3v-2h2zm3 0v2H6v-2h2zm3 0v2H9v-2h2zm6 0v2h-5v-2h5zm-6 3v2H3v-2h8zm3 0v2h-2v-2h2zm3 0v2h-2v-2h2z"></path></svg>
<svg class="abs" style="left:20.9px;top:111.0px" width="18" height="18" viewBox="0 0 20 20" fill="#50575e"><text x="10" y="12.600" text-anchor="middle" font-family="Liberation Sans, sans-serif" font-size="6.800" font-weight="700">ABC</text><path d="M2.500 9.600h15v.9h-15z"></path></svg>
<svg class="abs" style="left:50.3px;top:111.0px" width="18" height="18" viewBox="0 0 20 20"><path fill="#50575e" d="M4 9h12v2H4z"></path></svg>
<svg class="abs" style="left:79.4px;top:111.0px" width="18" height="18" viewBox="0 0 20 20"><path fill="#50575e" d="M13.230 15h1.900L11 4H9L5 15h1.880l1.070-3h4.180zm-1.530-4.540H8.510L10 5.600z"></path></svg>
<svg class="abs" style="left:104.5px;top:118.0px" width="7" height="5" viewBox="0 0 7 5"><path d="M0 0h7L3.500 5z" fill="#50575e"></path></svg>
<svg class="abs" style="left:124.1px;top:111.0px" width="18" height="18" viewBox="0 0 20 20"><path fill="#50575e" d="M12.380 2L15 5v1H5V5l2.640-3h4.740zM10 5c.550 0 1-.440 1-1 0-.550-.450-1-1-1s-1 .450-1 1c0 .560.450 1 1 1zm5.450-1H17c.550 0 1 .450 1 1v12c0 .560-.450 1-1 1H3c-.550 0-1-.440-1-1V5c0-.550.450-1 1-1h1.550L4 4.630V7h12V4.630zM14 11V9H6v2h3v5h2v-5h3z"></path></svg>
<svg class="abs" style="left:152.5px;top:111.0px" width="18" height="18" viewBox="0 0 20 20"><rect x="3.200" y="6.800" width="13.600" height="6.600" rx="1.600" fill="none" stroke="#50575e" stroke-width="1.500" transform="rotate(-45 10 10)"></rect><path d="M5.500 10.500l4 4" stroke="#50575e" stroke-width="1.300"></path></svg>
<div class="tx" style="left:181.8px;top:110.5px;width:18px;text-align:center;font-size:15.500px;line-height:18px;color:#50575e;font-weight:700">Ω</div>
<svg class="abs" style="left:210.4px;top:111.0px" width="18" height="18" viewBox="0 0 20 20"><path fill="#50575e" d="M3 3h14v1.600H3zM9 6.500h8v1.600H9zM9 10h8v1.600H9zM3 13.500h14v1.600H3zM9 17h8v1.600H9zM7 6v6L3 9z"></path></svg>
<svg class="abs" style="left:240.0px;top:111.0px" width="18" height="18" viewBox="0 0 20 20"><path fill="#50575e" d="M3 3h14v1.600H3zM3 6.500h8v1.600H3zM3 10h8v1.600H3zM3 13.500h14v1.600H3zM3 17h8v1.600H3zM13 6v6l4-3z"></path></svg>
<svg class="abs" style="left:270.0px;top:111.5px" width="16" height="16" viewBox="0 0 20 20"><path fill="#b4b9be" d="M12 5H7V2L1 6l6 4V7h5c2.200 0 4 1.800 4 4s-1.800 4-4 4H7v2h5c3.300 0 6-2.700 6-6s-2.700-6-6-6z"></path></svg>
<svg class="abs" style="left:299.0px;top:111.5px" width="16" height="16" viewBox="0 0 20 20"><path fill="#b4b9be" d="M8 5h5V2l6 4-6 4V7H8c-2.200 0-4 1.800-4 4s1.800 4 4 4h5v2H8c-3.300 0-6-2.700-6-6s2.700-6 6-6z"></path></svg>
<svg class="abs" style="left:326.9px;top:111.0px" width="18" height="18" viewBox="0 0 20 20"><path fill="#3c434a" d="M17 10c0-3.870-3.140-7-7-7-3.870 0-7 3.130-7 7s3.130 7 7 7c3.860 0 7-3.130 7-7zm-6.300 1.480H9.140v-.430c0-.380.080-.700.240-.980s.460-.570.880-.890c.410-.290.680-.530.810-.710.140-.180.200-.390.200-.620 0-.250-.090-.440-.280-.580-.190-.130-.450-.190-.790-.190-.580 0-1.250.190-2 .570l-.640-1.280c.870-.490 1.800-.740 2.770-.740.810 0 1.450.200 1.920.580.480.390.710.910.710 1.550 0 .430-.090.800-.290 1.110-.190.320-.570.670-1.110 1.060-.380.280-.610.490-.710.630-.100.150-.150.340-.150.570v.350zm-1.470 2.740c-.180-.170-.270-.420-.270-.730 0-.330.080-.580.260-.750s.430-.250.770-.250c.320 0 .570.090.750.260s.270.420.270.740c0 .300-.090.550-.270.720-.180.180-.430.270-.750.270-.330 0-.580-.090-.760-.260z"></path></svg>
</div>
</div>

<!-- SIDE COLUMN -->
<div id="side">
<div class="pb" style="left:1635px;top:40px;width:252px;height:335px">
<div class="abs" style="left:10px;top:0;width:234px;height:235.500px;background:#e8eff3;border:1px solid #d2d8dc"></div>
<svg class="abs" style="left:50px;top:45px" width="160" height="150" viewBox="0 0 972 911">
<defs><filter id="bl" x="-20%" y="-20%" width="140%" height="140%"><feGaussianBlur stdDeviation="22"></feGaussianBlur></filter>
<clipPath id="sc"><path d="M40 290Q110 200 200 140Q270 105 335 85L490 280L560 40Q650 55 720 90Q820 110 900 140Q918 190 885 255Q862 300 840 330L735 268Q752 380 722 480Q748 640 775 830Q640 862 500 862Q370 866 262 845Q250 700 270 560Q262 470 225 382L150 435Q85 370 40 290z"></path></clipPath></defs>
<g stroke="#2f4d44" stroke-width="4.800" stroke-linejoin="round" stroke-linecap="round">
<path d="M345 88Q450 78 560 45L490 270z" fill="#7fcdb0"></path>
<path d="M40 290Q110 200 200 140Q270 105 335 85L490 280L560 40Q650 55 720 90Q820 110 900 140Q918 190 885 255Q862 300 840 330L735 268Q752 380 722 480Q748 640 775 830Q640 862 500 862Q370 866 262 845Q250 700 270 560Q262 470 225 382L150 435Q85 370 40 290z" fill="#9cdbc3"></path>
<g clip-path="url(#sc)" stroke="none" filter="url(#bl)"><ellipse cx="330" cy="300" rx="70" ry="120" fill="#8ad2b6" opacity=".7"></ellipse><ellipse cx="650" cy="620" rx="90" ry="160" fill="#8ad2b6" opacity=".6"></ellipse><ellipse cx="480" cy="640" rx="110" ry="90" fill="#b2e5d2" opacity=".7"></ellipse><ellipse cx="820" cy="220" rx="60" ry="80" fill="#8ad2b6" opacity=".6"></ellipse><ellipse cx="110" cy="320" rx="50" ry="70" fill="#8ad2b6" opacity=".6"></ellipse><ellipse cx="620" cy="200" rx="60" ry="80" fill="#b2e5d2" opacity=".6"></ellipse></g>
<path d="M262 845Q480 800 775 830Q640 866 500 864Q370 868 262 845z" fill="#7fcdb0"></path>
<path d="M335 85L490 280L560 40L552 64L490 250L357 92z" fill="#a8e0cb" stroke-width="3.600"></path>
<path d="M200 142Q252 260 225 382M720 90Q705 180 735 268M55 280L150 420M880 135Q892 200 822 318" fill="none" stroke-width="3.800"></path>
<path d="M225 395Q290 402 350 430M665 305Q685 380 705 470M385 775Q480 750 550 712M520 765Q590 725 655 745" fill="none" stroke-width="3.800"></path>
<ellipse cx="510" cy="415" rx="100" ry="106" fill="#f7cb7a" stroke="#5e4e22" stroke-width="3"></ellipse>
<path d="M505 312Q520 300 535 310" fill="none" stroke="#5e4e22" stroke-width="3"></path>
<circle cx="550" cy="386" r="27" fill="#fff" stroke="#3a3a3a" stroke-width="3.500"></circle>
<circle cx="551" cy="388" r="11" fill="#3b6f9c" stroke="none"></circle>
<circle cx="551" cy="388" r="4.500" fill="#1c2a38" stroke="none"></circle>
<path d="M438 402Q465 372 506 396" fill="none" stroke="#3a3a3a" stroke-width="4.500"></path>
<path d="M450 446Q510 466 576 434Q566 498 512 508Q466 500 450 446z" fill="#6a3526" stroke="#3a3a3a" stroke-width="3"></path>
<path d="M458 452Q510 470 570 442L566 458Q510 482 463 466z" fill="#fff" stroke="none"></path>
<path d="M486 470Q506 462 524 470Q530 505 508 514Q484 508 486 470z" fill="#ee8e8e" stroke="#8a3c3c" stroke-width="2.500"></path>
</g></svg>
<svg class="abs" style="left:18.1px;top:238.7px" width="14.400" height="14.400" viewBox="0 0 20 20"><path fill="#5a5a5a" d="M17 10c0-3.870-3.140-7-7-7-3.870 0-7 3.130-7 7s3.130 7 7 7c3.860 0 7-3.130 7-7zm-6.300 1.480H9.140v-.430c0-.380.080-.700.240-.980s.460-.570.880-.890c.410-.290.680-.530.810-.710.140-.180.200-.390.200-.620 0-.250-.090-.440-.280-.580-.190-.130-.450-.190-.790-.190-.580 0-1.250.190-2 .570l-.640-1.280c.870-.490 1.800-.740 2.770-.740.810 0 1.450.200 1.920.580.480.390.710.910.710 1.550 0 .430-.090.800-.290 1.110-.190.320-.570.670-1.110 1.060-.380.280-.610.490-.710.630-.100.150-.150.340-.150.570v.350zm-1.470 2.740c-.180-.170-.270-.420-.270-.730 0-.330.080-.580.260-.750s.430-.250.770-.250c.320 0 .570.090.750.260s.270.420.270.740c0 .300-.090.550-.270.720-.180.180-.430.270-.750.270-.330 0-.580-.090-.760-.260z"></path></svg>
<div class="tx" style="left: 10.3px; top: 272.7px; font-size: 11.7px; line-height: 16px; color: rgb(100, 105, 112); letter-spacing: 0.05px;">Click the image to edit or update</div>
<a class="tx" style="left: 10.3px; top: 307.7px; font-size: 11.7px; line-height: 16px; color: rgb(179, 45, 46); text-decoration: underline; letter-spacing: -0.08px;">Remove product image</a>
</div>
<div class="pb" style="left:1635px;top:393px;width:252px;height:76px">
<div class="hd" style="height:34px"></div>
<h2 style="left: 12.3px; top: 9.9px; letter-spacing: 0.17px;">Product gallery</h2>
<svg class="abs" style="left:185.8px;top:11.0px" width="62" height="12" viewBox="0 0 62 12" fill="none" stroke="#555b62" stroke-width="1.900"><path d="M2.200 9L7.700 3.500l5.500 5.500"></path><path d="M25.500 3.500L31 9l5.500-5.500"></path><path d="M51.100 8.100L55 2.600l3.900 5.500z" fill="#787c82" stroke="none"></path></svg>
<a class="tx" style="left: 12.3px; top: 46.9px; font-size: 11.7px; line-height: 16px; text-decoration: underline; letter-spacing: 0.02px;">Add product gallery images</a>
<svg class="abs" style="left:162.8px;top:47.9px" width="14.400" height="14.400" viewBox="0 0 20 20"><path fill="#5a5a5a" d="M17 10c0-3.870-3.140-7-7-7-3.870 0-7 3.130-7 7s3.130 7 7 7c3.860 0 7-3.130 7-7zm-6.300 1.480H9.140v-.430c0-.380.080-.700.240-.980s.460-.570.880-.890c.410-.290.680-.530.810-.710.140-.180.200-.390.200-.620 0-.250-.090-.440-.280-.580-.190-.130-.450-.190-.790-.190-.580 0-1.250.190-2 .570l-.640-1.280c.870-.490 1.800-.740 2.770-.740.810 0 1.450.200 1.920.580.480.390.710.910.710 1.550 0 .430-.090.800-.290 1.110-.190.320-.570.670-1.110 1.060-.380.280-.610.490-.710.630-.100.150-.150.340-.150.570v.350zm-1.470 2.740c-.180-.170-.270-.420-.270-.730 0-.330.080-.580.260-.750s.430-.250.770-.250c.320 0 .570.090.750.260s.270.420.270.740c0 .300-.090.550-.270.720-.180.180-.430.270-.750.270-.330 0-.580-.090-.760-.260z"></path></svg>
</div>
<div class="pb" style="left:1635px;top:487px;width:252px;height:294px">
<div class="hd" style="height:34px"></div>
<h2 style="left: 12.3px; top: 9.9px; letter-spacing: 0.06px;">Product categories</h2>
<svg class="abs" style="left:185.8px;top:11.2px" width="62" height="12" viewBox="0 0 62 12" fill="none" stroke="#555b62" stroke-width="1.900"><path d="M2.200 9L7.700 3.500l5.500 5.500"></path><path d="M25.500 3.500L31 9l5.500-5.500"></path><path d="M51.100 8.100L55 2.600l3.900 5.500z" fill="#787c82" stroke="none"></path></svg>
<div class="abs" style="left:12px;top:66.0px;width:228px;height:182px;border:1px solid #dcdcde;background:#fff"></div>
<div class="abs" style="left:12px;top:41.0px;width:80px;height:26px;border:1px solid #dcdcde;border-bottom:0;background:#fff"></div>
<div class="tx" style="left: 17.2px; top: 46.1px; font-size: 11.7px; line-height: 16px; color: rgb(60, 67, 74); letter-spacing: -0.08px;">All categories</div>
<div class="tx" style="left: 101.3px; top: 46.1px; font-size: 11.7px; line-height: 16px; color: rgb(34, 113, 177); letter-spacing: -0.15px;">Most Used</div>
<div class="cb" style="left:23.0px;top:71.1px"></div>
<div class="tx" style="left: 44.9px; top:70.9px; font-size: 11.7px; line-height: 16px; color: rgb(60, 67, 74); letter-spacing: -0.01px;">Autogenerated</div>
<div class="cb" style="left:23.0px;top:92.1px"></div>
<div class="tx" style="left: 44.9px; top:91.9px; font-size: 11.7px; line-height: 16px; color: rgb(60, 67, 74); letter-spacing: 0px;">Clothing</div>
<div class="cb" style="left:40.2px;top:113.2px"></div>
<div class="tx" style="left: 61px; top:113.0px; font-size: 11.7px; line-height: 16px; color: rgb(60, 67, 74); letter-spacing: -0.44px;">Accessories</div>
<div class="cb" style="left:40.2px;top:134.2px"></div>
<div class="tx" style="left: 61px; top:134.0px; font-size: 11.7px; line-height: 16px; color: rgb(60, 67, 74); letter-spacing: -0.16px;">Hoodies</div>
<div class="cb" style="left:40.2px;top:155.3px"><svg class="abs" style="left:1.500px;top:2px" width="10" height="9" viewBox="0 0 10 9" fill="none" stroke="#2271b1" stroke-width="1.800"><path d="M1 4.500l3 3L9 1.200"></path></svg></div>
<div class="tx" style="left: 61px; top:155.1px; font-size: 11.7px; line-height: 16px; color: rgb(60, 67, 74); letter-spacing: -0.31px;">Tshirts</div>
<div class="cb" style="left:23.0px;top:176.3px"></div>
<div class="tx" style="left: 44.9px; top:176.1px; font-size: 11.7px; line-height: 16px; color: rgb(60, 67, 74); letter-spacing: -0.28px;">Decor</div>
<div class="cb" style="left:23.0px;top:197.4px"></div>
<div class="tx" style="left: 44.9px; top:197.2px; font-size: 11.7px; line-height: 16px; color: rgb(60, 67, 74); letter-spacing: -0.15px;">Music</div>
<div class="cb" style="left:23.0px;top:218.4px"></div>
<div class="tx" style="left: 44.9px; top:218.2px; font-size: 11.7px; line-height: 16px; color: rgb(60, 67, 74); letter-spacing: -0.06px;">Uncategorized @ur</div>
<div class="abs" style="left:224.0px;top:67.0px;width:15px;height:180px;background:#fafafa"></div>
<div class="abs" style="left:227.3px;top:107.0px;width:8.500px;height:122px;background:#8b8b8b;border-radius:4.500px"></div>
<svg class="abs" style="left:226.6px;top:72.5px" width="10" height="6" viewBox="0 0 10 6"><path d="M0 6L5 0l5 6z" fill="#8b8b8b"></path></svg>
<svg class="abs" style="left:226.6px;top:236.5px" width="10" height="6" viewBox="0 0 10 6"><path d="M0 0L5 6l5-6z" fill="#8b8b8b"></path></svg>
<a class="tx" style="left: 12.1px; top: 258px; line-height: 16px; text-decoration: underline; font-weight: 400; -webkit-text-stroke: 0.34px rgb(34, 113, 177); font-size: 11.7px; letter-spacing: 0.26px;">+ Add new category</a>
</div>
<div class="pb" style="left:1635px;top:799px;width:252px;height:130px">
<div class="hd" style="height:34px"></div>
<h2 style="left: 12.3px; top: 9.9px; letter-spacing: 0.09px;">Product tags</h2>
<svg class="abs" style="left:185.8px;top:11.2px" width="62" height="12" viewBox="0 0 62 12" fill="none" stroke="#555b62" stroke-width="1.900"><path d="M2.200 9L7.700 3.500l5.500 5.500"></path><path d="M25.500 3.500L31 9l5.500-5.500"></path><path d="M51.100 8.100L55 2.600l3.900 5.500z" fill="#787c82" stroke="none"></path></svg>
<div class="inp" style="left:12px;top:46.0px;width:162px;height:27px"></div>
<div class="abs" style="left: 177.2px; top: 46px; width: 41.5px; height: 27px; border: 1px solid rgb(34, 113, 177); border-radius: 3px; background: rgb(246, 247, 247); color: rgb(34, 113, 177); font-size: 11.7px; line-height: 25.5px; text-align: center; letter-spacing: -0.2px;">Add</div>
<div class="tx" style="left: 12.1px; top: 86px; font-size: 11.7px; line-height: 16px; color: rgb(100, 105, 112); letter-spacing: -0.12px;">Separate tags with commas</div>
</div>
</div>



</body></html>
